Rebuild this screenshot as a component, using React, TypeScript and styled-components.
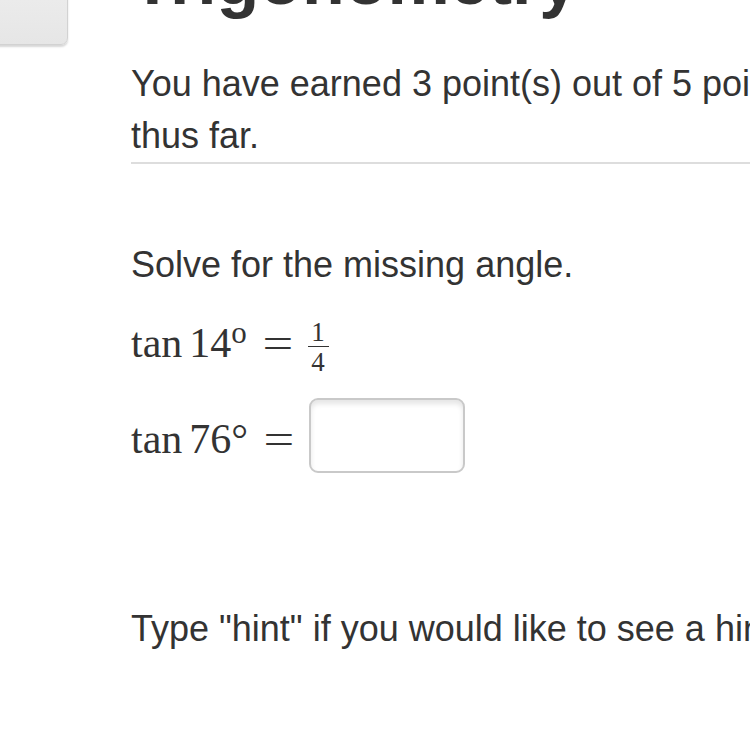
import * as React from "react";
import styled, { createGlobalStyle } from "styled-components";

const GlobalStyle = createGlobalStyle`
  html, body {
    margin: 0;
    padding: 0;
    background: #ffffff;
    overflow: hidden;
  }
  body {
    font-family: "Liberation Sans", Arial, sans-serif;
    color: #333333;
  }
`;

const App = () => {
  return (
    <>
      <GlobalStyle />
      <Page>
        <Header>
          <BackButton aria-label="Back" />
          <Title>Trigonometry</Title>
        </Header>
        <Content>
          <Score>You have earned 3 point(s) out of 5 points thus far.</Score>
          <Question>
            <Prompt>Solve for the missing angle.</Prompt>
            <MathRow>
              tan<Thin />14<Sup>o</Sup>
              <Equals>=</Equals>
              <Fraction>
                <Num>1</Num>
                <Den>4</Den>
              </Fraction>
            </MathRow>
            <MathRow $gap={25}>
              tan<Thin />76°
              <Equals>=</Equals>
              <Answer type="text" aria-label="answer" />
            </MathRow>
          </Question>
          <Hint>Type "hint" if you would like to see a hint.</Hint>
        </Content>
      </Page>
    </>
  );
};

export default App;

const Page = styled.div`
  display: flex;
  flex-direction: column;
  width: 900px;
`;

const Header = styled.div`
  display: flex;
  align-items: flex-start;
  gap: 63px;
  margin-top: -54px;
`;

const BackButton = styled.button`
  width: 100px;
  height: 99px;
  margin-left: -32px;
  flex-shrink: 0;
  border: 1px solid #d2d2d2;
  border-radius: 7px;
  background: linear-gradient(180deg, #f1f1f1, #e6e6e6);
  box-shadow: 0 2px 2px rgba(0, 0, 0, 0.16);
`;

const Title = styled.h1`
  margin: 0;
  font-size: 70px;
  line-height: 68px;
  font-weight: bold;
  color: #333333;
  white-space: nowrap;
`;

const Content = styled.div`
  display: flex;
  flex-direction: column;
  width: 700px;
  margin-left: 131px;
  margin-top: 13px;
`;

const Score = styled.p`
  margin: 0;
  font-size: 36px;
  line-height: 52px;
  border-bottom: 2px solid #dddddd;
`;

const Question = styled.div`
  display: flex;
  flex-direction: column;
  margin-top: 75px;
`;

const Prompt = styled.p`
  margin: 0;
  font-size: 36px;
  line-height: 52px;
`;

const MathRow = styled.div<{ $gap?: number }>`
  font-family: "Liberation Serif", "Times New Roman", serif;
  font-size: 42px;
  line-height: 60px;
  margin-top: ${(p) => p.$gap ?? 22}px;
  white-space: nowrap;
`;

const Thin = styled.span`
  display: inline-block;
  width: 7px;
`;

const Sup = styled.span`
  font-size: 31px;
  vertical-align: 14px;
  line-height: 0;
`;

const Equals = styled.span`
  display: inline-block;
  margin: 0 18px 0 19px;
  transform: scaleX(1.3);
`;

const Fraction = styled.span`
  display: inline-flex;
  flex-direction: column;
  align-items: center;
  vertical-align: middle;
  font-size: 27px;
  line-height: 20px;
  width: 21px;
`;

const Num = styled.span`
  display: block;
  width: 100%;
  text-align: center;
  padding-bottom: 4px;
  border-bottom: 1.5px solid #333333;
`;

const Den = styled.span`
  display: block;
  padding-top: 5px;
`;

const Answer = styled.input`
  box-sizing: border-box;
  width: 156px;
  height: 75px;
  margin: 0 0 15px 0;
  vertical-align: middle;
  border: 2px solid #c9c9c9;
  border-radius: 9px;
  background: #ffffff;
  box-shadow: inset 0 4px 5px rgba(0, 0, 0, 0.1);
  outline: none;
`;

const Hint = styled.p`
  margin: 115px 0 0;
  font-size: 36px;
  line-height: 52px;
`;
